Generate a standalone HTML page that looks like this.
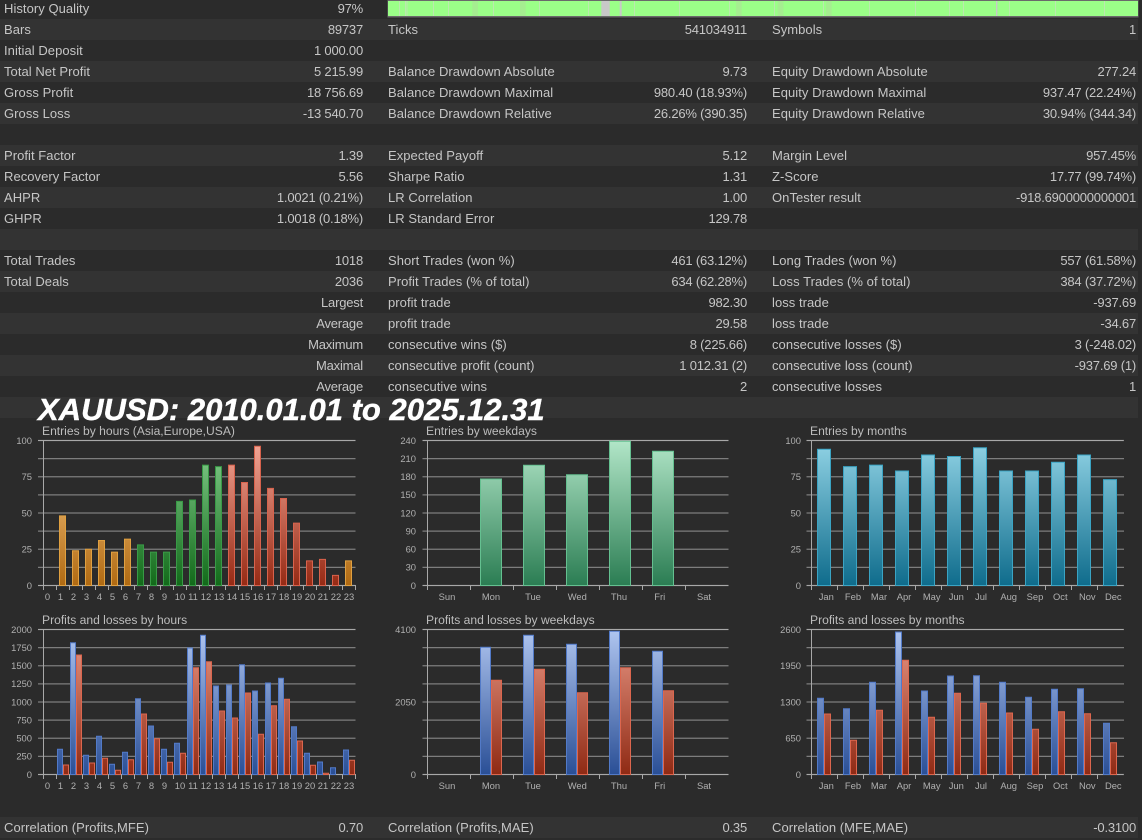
<!DOCTYPE html>
<html><head><meta charset="utf-8"><title>Report</title>
<style>
html,body{margin:0;padding:0;background:#2b2b2b;width:1142px;height:840px;overflow:hidden}
body{position:relative;font-family:"Liberation Sans",Arial,sans-serif;font-size:13px;color:#c6c6c6;filter:blur(.3px)}
.r{position:absolute;left:0;width:1138px;height:21px;line-height:21px;white-space:nowrap}
.o{background:#333333}
.r span{position:absolute;top:0}
.a,.c,.e{letter-spacing:.05px}
.b,.d,.f{letter-spacing:-.2px}
.a{left:4px}.b{right:775px}.c{left:388px}.d{right:391px}.e{left:772px}.f{right:2px}
svg{position:absolute;left:0;top:0}
svg text{font-family:"Liberation Sans",Arial,sans-serif}
.t{font-size:12.1px;fill:#bdbdbd}
.y text,.x text{font-size:9.4px;fill:#b0b0b0}
.y text{text-anchor:end}
.x text{text-anchor:middle}
.g{fill:none;stroke:#7d7d7d;stroke-width:1.2}
.ax{fill:none;stroke:#a8a8a8;stroke-width:1}
.tk{fill:none;stroke:#a8a8a8;stroke-width:5}
</style></head><body>
<div class="r" style="top:-2px;height:21px"><span class="a">History Quality</span><span class="b">97%</span></div>
<div class="r o" style="top:19px"><span class="a">Bars</span><span class="b">89737</span><span class="c">Ticks</span><span class="d">541034911</span><span class="e">Symbols</span><span class="f">1</span></div>
<div class="r" style="top:40px"><span class="a">Initial Deposit</span><span class="b">1 000.00</span></div>
<div class="r o" style="top:61px"><span class="a">Total Net Profit</span><span class="b">5 215.99</span><span class="c">Balance Drawdown Absolute</span><span class="d">9.73</span><span class="e">Equity Drawdown Absolute</span><span class="f">277.24</span></div>
<div class="r" style="top:82px"><span class="a">Gross Profit</span><span class="b">18 756.69</span><span class="c">Balance Drawdown Maximal</span><span class="d">980.40 (18.93%)</span><span class="e">Equity Drawdown Maximal</span><span class="f">937.47 (22.24%)</span></div>
<div class="r o" style="top:103px"><span class="a">Gross Loss</span><span class="b">-13 540.70</span><span class="c">Balance Drawdown Relative</span><span class="d">26.26% (390.35)</span><span class="e">Equity Drawdown Relative</span><span class="f">30.94% (344.34)</span></div>
<div class="r o" style="top:145px"><span class="a">Profit Factor</span><span class="b">1.39</span><span class="c">Expected Payoff</span><span class="d">5.12</span><span class="e">Margin Level</span><span class="f">957.45%</span></div>
<div class="r" style="top:166px"><span class="a">Recovery Factor</span><span class="b">5.56</span><span class="c">Sharpe Ratio</span><span class="d">1.31</span><span class="e">Z-Score</span><span class="f">17.77 (99.74%)</span></div>
<div class="r o" style="top:187px"><span class="a">AHPR</span><span class="b">1.0021 (0.21%)</span><span class="c">LR Correlation</span><span class="d">1.00</span><span class="e">OnTester result</span><span class="f">-918.6900000000001</span></div>
<div class="r" style="top:208px"><span class="a">GHPR</span><span class="b">1.0018 (0.18%)</span><span class="c">LR Standard Error</span><span class="d">129.78</span></div>
<div class="r o" style="top:229px"></div>
<div class="r" style="top:250px"><span class="a">Total Trades</span><span class="b">1018</span><span class="c">Short Trades (won %)</span><span class="d">461 (63.12%)</span><span class="e">Long Trades (won %)</span><span class="f">557 (61.58%)</span></div>
<div class="r o" style="top:271px"><span class="a">Total Deals</span><span class="b">2036</span><span class="c">Profit Trades (% of total)</span><span class="d">634 (62.28%)</span><span class="e">Loss Trades (% of total)</span><span class="f">384 (37.72%)</span></div>
<div class="r" style="top:292px"><span class="b">Largest</span><span class="c">profit trade</span><span class="d">982.30</span><span class="e">loss trade</span><span class="f">-937.69</span></div>
<div class="r o" style="top:313px"><span class="b">Average</span><span class="c">profit trade</span><span class="d">29.58</span><span class="e">loss trade</span><span class="f">-34.67</span></div>
<div class="r" style="top:334px"><span class="b">Maximum</span><span class="c">consecutive wins ($)</span><span class="d">8 (225.66)</span><span class="e">consecutive losses ($)</span><span class="f">3 (-248.02)</span></div>
<div class="r o" style="top:355px"><span class="b">Maximal</span><span class="c">consecutive profit (count)</span><span class="d">1 012.31 (2)</span><span class="e">consecutive loss (count)</span><span class="f">-937.69 (1)</span></div>
<div class="r" style="top:376px"><span class="b">Average</span><span class="c">consecutive wins</span><span class="d">2</span><span class="e">consecutive losses</span><span class="f">1</span></div>
<div class="r o" style="top:397px"></div>
<div class="r o" style="top:817px"><span class="a">Correlation (Profits,MFE)</span><span class="b">0.70</span><span class="c">Correlation (Profits,MAE)</span><span class="d">0.35</span><span class="e">Correlation (MFE,MAE)</span><span class="f">-0.3100</span></div>

<svg width="1142" height="840" viewBox="0 0 1142 840" xmlns="http://www.w3.org/2000/svg">
<defs>
<linearGradient id="or" gradientUnits="userSpaceOnUse" x1="0" y1="585" x2="0" y2="440"><stop offset="0" stop-color="#b06a12"/><stop offset="1" stop-color="#ffd090"/></linearGradient>
<linearGradient id="gr" gradientUnits="userSpaceOnUse" x1="0" y1="585" x2="0" y2="440"><stop offset="0" stop-color="#126a1a"/><stop offset="1" stop-color="#88d090"/></linearGradient>
<linearGradient id="rd" gradientUnits="userSpaceOnUse" x1="0" y1="585" x2="0" y2="440"><stop offset="0" stop-color="#962a14"/><stop offset="1" stop-color="#f4a898"/></linearGradient>
<linearGradient id="wk" gradientUnits="userSpaceOnUse" x1="0" y1="585" x2="0" y2="440"><stop offset="0" stop-color="#2b7d53"/><stop offset="1" stop-color="#b2e6c8"/></linearGradient>
<linearGradient id="mo" gradientUnits="userSpaceOnUse" x1="0" y1="585" x2="0" y2="440"><stop offset="0" stop-color="#0f6c8c"/><stop offset="1" stop-color="#92d4e6"/></linearGradient>
<linearGradient id="bl" gradientUnits="userSpaceOnUse" x1="0" y1="774" x2="0" y2="629"><stop offset="0" stop-color="#2a4f96"/><stop offset="1" stop-color="#b0c6f0"/></linearGradient>
<linearGradient id="rp" gradientUnits="userSpaceOnUse" x1="0" y1="774" x2="0" y2="629"><stop offset="0" stop-color="#8f2a14"/><stop offset="1" stop-color="#eb9a88"/></linearGradient>
<path id="g1" d="M0 0H317.5M0 18.1H317.5M0 36.25H317.5M0 54.4H317.5M0 72.5H317.5M0 90.6H317.5M0 108.75H317.5M0 126.9H317.5M0 145H317.5"/>
<path id="g2" d="M0 0H306M0 18.1H306M0 36.25H306M0 54.4H306M0 72.5H306M0 90.6H306M0 108.75H306M0 126.9H306M0 145H306"/>
</defs>

<!-- quality bar -->
<rect x="387.5" y="0" width="751" height="17.5" fill="#6a6a6a"/>
<rect x="388" y="1" width="750" height="15" fill="#9bff88"/>
<g fill="#a5ee90"><rect x="472.3" y="1" width="5.7" height="15"/><rect x="520" y="1" width="5.7" height="15"/><rect x="736" y="1" width="5.7" height="15"/><rect x="777.7" y="1" width="5.7" height="15"/><rect x="826" y="1" width="5.7" height="15"/></g>
<g fill="#c8c8c8"><rect x="601.3" y="1" width="8.4" height="15"/><rect x="619.7" y="1" width="2" height="15"/><rect x="996" y="1" width="1.4" height="15"/></g>
<path fill="none" stroke="#c4e4b8" stroke-width=".8" d="M399.5 1v15M405.5 1v15M407 1v15M433.5 1v15M448.5 1v15M493.5 1v15M539.5 1v15M588.5 1v15M634.5 1v15M679.5 1v15M729.5 1v15M774.5 1v15M823.5 1v15M869.5 1v15M915.5 1v15M949.5 1v15M963.5 1v15M1009.5 1v15M1055.5 1v15M1104.5 1v15"/>

<!-- title -->
<text x="38" y="420" font-size="31" font-weight="bold" font-style="italic" fill="#ffffff" stroke="#ffffff" stroke-width=".4">XAUUSD: 2010.01.01 to 2025.12.31</text>

<!-- chart 1 -->
<text class="t" x="42" y="435">Entries by hours (Asia,Europe,USA)</text>
<use href="#g1" x="38" y="440.5" class="g"/>
<path class="ax" d="M43.5 440V590M38 440.5H355.5M38 585.5H355.5"/>
<path class="tk" d="M43 587.5H357" stroke-dasharray="1 12"/>
<g class="y"><text x="32" y="444">100</text><text x="32" y="480">75</text><text x="32" y="516.5">50</text><text x="32" y="552.5">25</text><text x="32" y="589">0</text></g>
<g class="x"><text x="47.5" y="600">0</text><text x="60.5" y="600">1</text><text x="73.5" y="600">2</text><text x="86.5" y="600">3</text><text x="99.5" y="600">4</text><text x="112.5" y="600">5</text><text x="125.5" y="600">6</text><text x="138.5" y="600">7</text><text x="151.5" y="600">8</text><text x="164.5" y="600">9</text><text x="180" y="600">10</text><text x="193" y="600">11</text><text x="206" y="600">12</text><text x="219" y="600">13</text><text x="232" y="600">14</text><text x="245" y="600">15</text><text x="258" y="600">16</text><text x="271" y="600">17</text><text x="284" y="600">18</text><text x="297" y="600">19</text><text x="310" y="600">20</text><text x="323" y="600">21</text><text x="336" y="600">22</text><text x="349" y="600">23</text></g>
<path fill="url(#or)" stroke="#e0a040" d="M59.5 515.9V585.5h6V515.9zM72.5 550.7V585.5h6V550.7zM85.5 549.25V585.5h6V549.25zM98.5 540.55V585.5h6V540.55zM111.5 552.15V585.5h6V552.15zM124.5 539.1V585.5h6V539.1zM345.5 560.85V585.5h6V560.85z"/>
<path fill="url(#gr)" stroke="#389a46" d="M137.5 544.9V585.5h6V544.9zM150.5 552.15V585.5h6V552.15zM163.5 552.15V585.5h6V552.15zM176.5 501.4V585.5h6V501.4zM189.5 500V585.5h6V500zM202.5 465.15V585.5h6V465.15zM215.5 466.6V585.5h6V466.6z"/>
<path fill="url(#rd)" stroke="#d8624c" d="M228.5 465.15V585.5h6V465.15zM241.5 482.55V585.5h6V482.55zM254.5 446.3V585.5h6V446.3zM267.5 488.35V585.5h6V488.35zM280.5 498.5V585.5h6V498.5zM293.5 523.15V585.5h6V523.15zM306.5 560.85V585.5h6V560.85zM319.5 559.4V585.5h6V559.4zM332.5 575.35V585.5h6V575.35z"/>

<!-- chart 2 -->
<text class="t" x="426" y="435">Entries by weekdays</text>
<use href="#g2" x="422.5" y="440.5" class="g"/>
<path class="ax" d="M427.5 440V590M422.5 440.5H728.5M422.5 585.5H728.5"/>
<path class="tk" d="M427 587.5H700" stroke-dasharray="1 42"/>
<g class="y"><text x="416" y="444">240</text><text x="416" y="462">210</text><text x="416" y="480">180</text><text x="416" y="498">150</text><text x="416" y="516.5">120</text><text x="416" y="534.5">90</text><text x="416" y="552.5">60</text><text x="416" y="570.5">30</text><text x="416" y="589">0</text></g>
<g class="x"><text x="447" y="600">Sun</text><text x="491" y="600">Mon</text><text x="533" y="600">Tue</text><text x="577.3" y="600">Wed</text><text x="619" y="600">Thu</text><text x="659.7" y="600">Fri</text><text x="704" y="600">Sat</text></g>
<path fill="url(#wk)" stroke="#64c090" d="M480.5 479V585.5h21V479zM523.5 465.3V585.5h21V465.3zM566.5 474.7V585.5h21V474.7zM609.5 441.3V585.5h21V441.3zM652.5 451.3V585.5h21V451.3z"/>

<!-- chart 3 -->
<text class="t" x="810" y="435">Entries by months</text>
<use href="#g1" x="806.5" y="440.5" class="g"/>
<path class="ax" d="M811.5 440V590M806.5 440.5H1123.5M806.5 585.5H1123.5"/>
<path class="tk" d="M811 587.5H1100" stroke-dasharray="1 25"/>
<g class="y"><text x="801" y="444">100</text><text x="801" y="480">75</text><text x="801" y="516.5">50</text><text x="801" y="552.5">25</text><text x="801" y="589">0</text></g>
<g class="x"><text x="826.3" y="600">Jan</text><text x="853" y="600">Feb</text><text x="879" y="600">Mar</text><text x="904" y="600">Apr</text><text x="931.7" y="600">May</text><text x="956.3" y="600">Jun</text><text x="981" y="600">Jul</text><text x="1008.7" y="600">Aug</text><text x="1035" y="600">Sep</text><text x="1060.3" y="600">Oct</text><text x="1087.3" y="600">Nov</text><text x="1113.3" y="600">Dec</text></g>
<path fill="url(#mo)" stroke="#3aa4c4" d="M817.5 449.2V585.5h13V449.2zM843.5 466.6V585.5h13V466.6zM869.5 465.15V585.5h13V465.15zM895.5 470.95V585.5h13V470.95zM921.5 455V585.5h13V455zM947.5 456.45V585.5h13V456.45zM973.5 447.75V585.5h13V447.75zM999.5 470.95V585.5h13V470.95zM1025.5 470.95V585.5h13V470.95zM1051.5 462.25V585.5h13V462.25zM1077.5 455V585.5h13V455zM1103.5 479.65V585.5h13V479.65z"/>

<!-- chart 4 -->
<text class="t" x="42" y="624">Profits and losses by hours</text>
<use href="#g1" x="38" y="629.5" class="g"/>
<path class="ax" d="M43.5 629V779M38 629.5H355.5M38 774.5H355.5"/>
<path class="tk" d="M43 776.5H357" stroke-dasharray="1 12"/>
<g class="y"><text x="32" y="633">2000</text><text x="32" y="651">1750</text><text x="32" y="669">1500</text><text x="32" y="687">1250</text><text x="32" y="705.5">1000</text><text x="32" y="723.5">750</text><text x="32" y="741.5">500</text><text x="32" y="759.5">250</text><text x="32" y="778">0</text></g>
<g class="x"><text x="47.5" y="789">0</text><text x="60.5" y="789">1</text><text x="73.5" y="789">2</text><text x="86.5" y="789">3</text><text x="99.5" y="789">4</text><text x="112.5" y="789">5</text><text x="125.5" y="789">6</text><text x="138.5" y="789">7</text><text x="151.5" y="789">8</text><text x="164.5" y="789">9</text><text x="180" y="789">10</text><text x="193" y="789">11</text><text x="206" y="789">12</text><text x="219" y="789">13</text><text x="232" y="789">14</text><text x="245" y="789">15</text><text x="258" y="789">16</text><text x="271" y="789">17</text><text x="284" y="789">18</text><text x="297" y="789">19</text><text x="310" y="789">20</text><text x="323" y="789">21</text><text x="336" y="789">22</text><text x="349" y="789">23</text></g>
<path fill="url(#bl)" stroke="#527ac8" d="M57.5 749.3V774.5h5V749.3zM70.5 642.7V774.5h5V642.7zM83.5 755.3V774.5h5V755.3zM96.5 736.3V774.5h5V736.3zM109.5 764.3V774.5h5V764.3zM122.5 752.3V774.5h5V752.3zM135.5 698.7V774.5h5V698.7zM148.5 726V774.5h5V726zM161.5 749.3V774.5h5V749.3zM174.5 743.3V774.5h5V743.3zM187.5 648V774.5h5V648zM200.5 635.3V774.5h5V635.3zM213.5 686V774.5h5V686zM226.5 685V774.5h5V685zM239.5 664.7V774.5h5V664.7zM252.5 691V774.5h5V691zM265.5 683V774.5h5V683zM278.5 678.3V774.5h5V678.3zM291.5 726.7V774.5h5V726.7zM304.5 753.3V774.5h5V753.3zM317.5 762V774.5h5V762zM330.5 767.7V774.5h5V767.7zM343.5 750V774.5h5V750z"/>
<path fill="url(#rp)" stroke="#dc664e" d="M63.5 765V774.5h5V765zM76.5 655V774.5h5V655zM89.5 763V774.5h5V763zM102.5 758.3V774.5h5V758.3zM115.5 770.3V774.5h5V770.3zM128.5 759.7V774.5h5V759.7zM141.5 714V774.5h5V714zM154.5 738.7V774.5h5V738.7zM167.5 762.3V774.5h5V762.3zM180.5 753.3V774.5h5V753.3zM193.5 667.7V774.5h5V667.7zM206.5 661.7V774.5h5V661.7zM219.5 711V774.5h5V711zM232.5 718V774.5h5V718zM245.5 693V774.5h5V693zM258.5 734.3V774.5h5V734.3zM271.5 705.7V774.5h5V705.7zM284.5 699.3V774.5h5V699.3zM297.5 741V774.5h5V741zM310.5 765.3V774.5h5V765.3zM323.5 773.3V774.5h5V773.3zM349.5 760.3V774.5h5V760.3z"/>

<!-- chart 5 -->
<text class="t" x="426" y="624">Profits and losses by weekdays</text>
<use href="#g2" x="422.5" y="629.5" class="g"/>
<path class="ax" d="M427.5 629V779M422.5 629.5H728.5M422.5 774.5H728.5"/>
<path class="tk" d="M427 776.5H700" stroke-dasharray="1 42"/>
<g class="y"><text x="416" y="633">4100</text><text x="416" y="705.5">2050</text><text x="416" y="778">0</text></g>
<g class="x"><text x="447" y="789">Sun</text><text x="491" y="789">Mon</text><text x="533" y="789">Tue</text><text x="577.3" y="789">Wed</text><text x="619" y="789">Thu</text><text x="659.7" y="789">Fri</text><text x="704" y="789">Sat</text></g>
<path fill="url(#bl)" stroke="#527ac8" d="M480.5 647.3V774.5h10V647.3zM523.5 635.3V774.5h10V635.3zM566.5 644.3V774.5h10V644.3zM609.5 631.3V774.5h10V631.3zM652.5 651.3V774.5h10V651.3z"/>
<path fill="url(#rp)" stroke="#dc664e" d="M491.5 680.3V774.5h10V680.3zM534.5 669.3V774.5h10V669.3zM577.5 692.7V774.5h10V692.7zM620.5 667.7V774.5h10V667.7zM663.5 690.7V774.5h10V690.7z"/>

<!-- chart 6 -->
<text class="t" x="810" y="624">Profits and losses by months</text>
<use href="#g1" x="806.5" y="629.5" class="g"/>
<path class="ax" d="M811.5 629V779M806.5 629.5H1123.5M806.5 774.5H1123.5"/>
<path class="tk" d="M811 776.5H1100" stroke-dasharray="1 25"/>
<g class="y"><text x="801" y="633">2600</text><text x="801" y="669">1950</text><text x="801" y="705.5">1300</text><text x="801" y="741.5">650</text><text x="801" y="778">0</text></g>
<g class="x"><text x="826.3" y="789">Jan</text><text x="853" y="789">Feb</text><text x="879" y="789">Mar</text><text x="904" y="789">Apr</text><text x="931.7" y="789">May</text><text x="956.3" y="789">Jun</text><text x="981" y="789">Jul</text><text x="1008.7" y="789">Aug</text><text x="1035" y="789">Sep</text><text x="1060.3" y="789">Oct</text><text x="1087.3" y="789">Nov</text><text x="1113.3" y="789">Dec</text></g>
<path fill="url(#bl)" stroke="#527ac8" d="M817.5 698.3V774.5h6V698.3zM843.5 708.7V774.5h6V708.7zM869.5 682.3V774.5h6V682.3zM895.5 632V774.5h6V632zM921.5 691V774.5h6V691zM947.5 676V774.5h6V676zM973.5 675.7V774.5h6V675.7zM999.5 682.3V774.5h6V682.3zM1025.5 697.3V774.5h6V697.3zM1051.5 689.3V774.5h6V689.3zM1077.5 688.7V774.5h6V688.7zM1103.5 723.3V774.5h6V723.3z"/>
<path fill="url(#rp)" stroke="#dc664e" d="M824.5 714V774.5h6V714zM850.5 740.3V774.5h6V740.3zM876.5 710.3V774.5h6V710.3zM902.5 660.3V774.5h6V660.3zM928.5 717.3V774.5h6V717.3zM954.5 693.3V774.5h6V693.3zM980.5 703.3V774.5h6V703.3zM1006.5 713V774.5h6V713zM1032.5 729.3V774.5h6V729.3zM1058.5 711.7V774.5h6V711.7zM1084.5 713.7V774.5h6V713.7zM1110.5 742.7V774.5h6V742.7z"/>
</svg>
</body></html>
